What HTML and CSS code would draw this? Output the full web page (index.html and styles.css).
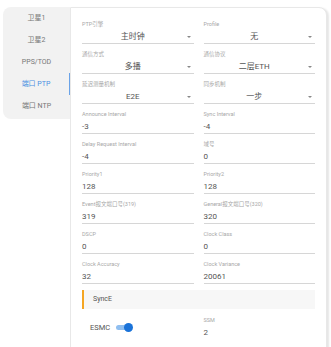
FILE: index.html
```html
<!DOCTYPE html>
<html lang="zh-CN">
<head>
    <meta charset="UTF-8">
    <title>端口 PTP</title>
    <link rel="stylesheet" href="styles.css">
</head>
<body>
    <div class="page">
        <nav class="tabs">
            <div class="tab">卫星1</div>
            <div class="tab">卫星2</div>
            <div class="tab">PPS/TOD</div>
            <div class="tab active">端口 PTP</div>
            <div class="tab">端口 NTP</div>
        </nav>

        <div class="card">
            <div class="form-grid">
                <div class="field select">
                    <div class="label">PTP引擎</div>
                    <div class="value">主时钟</div>
                </div>
                <div class="field select">
                    <div class="label">Profile</div>
                    <div class="value">无</div>
                </div>
                <div class="field select">
                    <div class="label">通信方式</div>
                    <div class="value">多播</div>
                </div>
                <div class="field select">
                    <div class="label">通信协议</div>
                    <div class="value">二层ETH</div>
                </div>
                <div class="field select">
                    <div class="label">延迟测量机制</div>
                    <div class="value">E2E</div>
                </div>
                <div class="field select">
                    <div class="label">同步机制</div>
                    <div class="value">一步</div>
                </div>

                <div class="field">
                    <div class="label">Announce Interval</div>
                    <div class="value">-3</div>
                </div>
                <div class="field">
                    <div class="label">Sync Interval</div>
                    <div class="value">-4</div>
                </div>
                <div class="field">
                    <div class="label">Delay Request Interval</div>
                    <div class="value">-4</div>
                </div>
                <div class="field">
                    <div class="label">域号</div>
                    <div class="value">0</div>
                </div>
                <div class="field">
                    <div class="label">Priority1</div>
                    <div class="value">128</div>
                </div>
                <div class="field">
                    <div class="label">Priority2</div>
                    <div class="value">128</div>
                </div>
                <div class="field">
                    <div class="label">Event报文端口号(319)</div>
                    <div class="value">319</div>
                </div>
                <div class="field">
                    <div class="label">General报文端口号(320)</div>
                    <div class="value">320</div>
                </div>
                <div class="field">
                    <div class="label">DSCP</div>
                    <div class="value">0</div>
                </div>
                <div class="field">
                    <div class="label">Clock Class</div>
                    <div class="value">0</div>
                </div>
                <div class="field">
                    <div class="label">Clock Accuracy</div>
                    <div class="value">32</div>
                </div>
                <div class="field">
                    <div class="label">Clock Variance</div>
                    <div class="value">20061</div>
                </div>
            </div>

            <div class="section-title">SyncE</div>

            <div class="form-grid">
                <div class="switch-row">
                    <span>ESMC</span>
                    <span class="switch on"><span class="knob"></span></span>
                </div>
                <div class="field">
                    <div class="label">SSM</div>
                    <div class="value">2</div>
                </div>
            </div>
        </div>
    </div>
</body>
</html>
```

FILE: styles.css
```css
body {
    margin: 0;
    font-family: Roboto, "Noto Sans CJK SC", sans-serif;
    color: #444;
    background-color: #fff;
}
.page {
    display: flex;
    align-items: flex-start;
    padding: 7px 4px 0 3px;
}
.tabs {
    width: 67px;
    flex-shrink: 0;
    background-color: #f2f2f2;
    border-radius: 8px 0 0 8px;
    padding-bottom: 2px;
}
.tab {
    height: 22px;
    line-height: 22px;
    text-align: center;
    font-size: 7px;
    color: #777;
}
.tab.active {
    color: #4a90e2;
    border-right: 1px solid #6aa3e8;
}
.card {
    flex: 1;
    height: 332px;
    overflow: hidden;
    background-color: #fff;
    border: 1px solid #e8e8e8;
    border-radius: 0 8px 0 0;
    box-shadow: 2px 1px 2px rgba(0,0,0,0.10);
    padding: 12px 11px 0 11px;
}
.form-grid {
    display: grid;
    grid-template-columns: 1fr 1fr;
    column-gap: 10px;
}
.field {
    border-bottom: 1px solid #d6d6d6;
    margin-bottom: 6px;
}
.label {
    font-size: 5.5px;
    line-height: 8px;
    color: #a8a8a8;
    white-space: nowrap;
}
.value {
    font-size: 8px;
    line-height: 13px;
    margin-top: 2px;
    color: #555;
}
.select .value {
    position: relative;
    text-align: center;
    padding-right: 10px;
}
/* 下拉箭头 */
.select .value::after {
    content: "";
    position: absolute;
    right: 3px;
    top: 6px;
    border-left: 2px solid transparent;
    border-right: 2px solid transparent;
    border-top: 2px solid #888;
}
.section-title {
    height: 19px;
    line-height: 19px;
    background-color: #f7f7f7;
    border-left: 2px solid #f5a623;
    padding-left: 9px;
    font-size: 7px;
    color: #555;
    margin-bottom: 7px;
}
.switch-row {
    display: flex;
    align-items: center;
    gap: 6px;
    padding-left: 8px;
    padding-top: 7px;
    font-size: 7.5px;
    color: #555;
    align-self: start;
}
.switch {
    position: relative;
    width: 15px;
    height: 5px;
    border-radius: 3px;
    background-color: #90bff0;
}
.switch .knob {
    position: absolute;
    right: -2px;
    top: -2px;
    width: 9px;
    height: 9px;
    border-radius: 50%;
    background-color: #1a73d9;
}
.form-grid .switch-row + .field {
    border-bottom: none;
}
```
